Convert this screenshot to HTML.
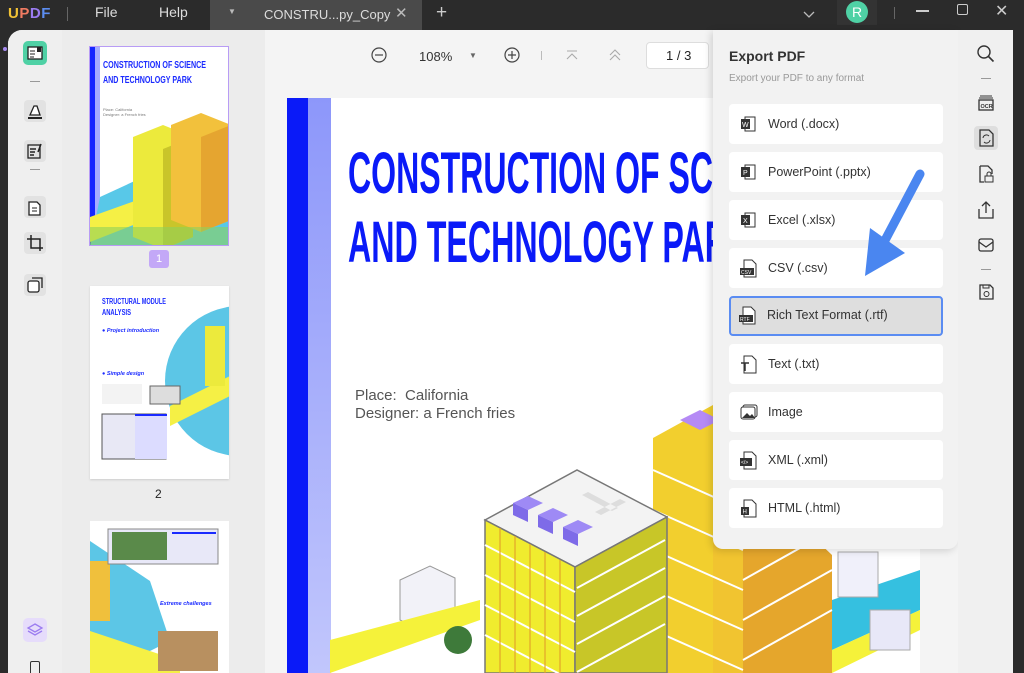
<!DOCTYPE html>
<html><head><meta charset="utf-8"><style>
*{box-sizing:border-box;margin:0;padding:0}
html,body{width:1024px;height:673px;overflow:hidden}
body{background:#2b2b2b;font-family:"Liberation Sans",sans-serif;position:relative}
.abs{position:absolute}
.top{left:0;top:0;width:1024px;height:30px;background:#2b2b2b;color:#ddd;font-size:14px}
.win{left:8px;top:30px;width:1005px;height:643px;background:#f4f4f4;border-radius:14px 14px 0 0;overflow:hidden}
.item{position:absolute;left:729px;width:214px;height:40px;background:#fff;border-radius:4px;font-size:12.5px;color:#333;line-height:40px;padding-left:39px}
.item svg{position:absolute;left:10px;top:10px}
.lt{position:absolute;left:17px;width:22px;height:22px;border-radius:4px;background:#e2e2e2}
</style></head><body>
<div class="abs top">
 <div class="abs" style="left:8px;top:5px;font-weight:bold;font-size:15px;letter-spacing:0.5px"><span style="color:#f2c335">U</span><span style="color:#f07b62">P</span><span style="color:#9b7cf0">D</span><span style="color:#5c8df0">F</span></div>
 <div class="abs" style="left:67px;top:7px;width:1px;height:14px;background:#666"></div>
 <div class="abs" style="left:95px;top:4px">File</div>
 <div class="abs" style="left:159px;top:4px">Help</div>
 <div class="abs" style="left:210px;top:0;width:212px;height:30px;background:#4a4a4a"></div>
 <div class="abs" style="left:228px;top:7px;font-size:8px;color:#bbb">▼</div>
 <div class="abs" style="left:264px;top:7px;font-size:13px;color:#ddd">CONSTRU...py_Copy</div>
 <div class="abs" style="left:395px;top:4px;color:#bbb;font-size:15px">✕</div>
 <div class="abs" style="left:436px;top:2px;color:#ccc;font-size:19px">+</div>
 <svg class="abs" style="left:802px;top:7px" width="14" height="14"><path d="M2 5l5 5 5-5" stroke="#bbb" fill="none" stroke-width="1.3"/></svg>
 <div class="abs" style="left:837px;top:0;width:40px;height:25px;background:#333"></div>
 <div class="abs" style="left:846px;top:1px;width:22px;height:22px;border-radius:50%;background:#4fd1a5;color:#fff;text-align:center;line-height:22px;font-size:14px">R</div>
 <div class="abs" style="left:894px;top:7px;width:1px;height:12px;background:#666"></div>
 <div class="abs" style="left:916px;top:10px;width:13px;height:1.5px;background:#ccc"></div>
 <div class="abs" style="left:957px;top:4px;width:11px;height:11px;border:1.5px solid #ccc;border-radius:2px"></div>
 <div class="abs" style="left:995px;top:1px;color:#ccc;font-size:16px">✕</div>
</div>
<div class="abs win"></div>
<div class="abs" style="left:3px;top:47px;width:4px;height:4px;border-radius:50%;background:#a68af0"></div>
<div class="abs" style="left:8px;top:30px;width:54px;height:643px;background:#efefef;border-radius:14px 0 0 0"></div>
<div class="abs" style="left:23px;top:41px;width:24px;height:24px;border-radius:5px;background:#4fd1a5"><svg width="24" height="24"><rect x="5" y="6" width="14" height="12" fill="#fff" stroke="#222" stroke-width="1.3"/><path d="M7 10h5M7 13h5M7 16h4" stroke="#222"/><rect x="14" y="6" width="4" height="5" fill="#222"/></svg></div>
<div class="abs" style="left:30px;top:81px;width:10px;height:1px;background:#999"></div>
<div class="lt" style="left:24px;top:100px"><svg width="22" height="22"><path d="M6 15l4-9h3l3 9z" fill="#fff" stroke="#222" stroke-width="1.3"/><path d="M4 18h14" stroke="#222" stroke-width="2"/></svg></div>
<div class="lt" style="left:24px;top:140px"><svg width="22" height="22"><rect x="4" y="5" width="12" height="13" fill="none" stroke="#222" stroke-width="1.3"/><path d="M6 9h6M6 12h5M6 15h4M17 4l-3 8" stroke="#222" stroke-width="1.5"/></svg></div>
<div class="abs" style="left:30px;top:169px;width:10px;height:1px;background:#999"></div>
<div class="lt" style="left:24px;top:196px"><svg width="22" height="22"><path d="M5 6h8l3 3v10H5z" fill="#fff" stroke="#222" stroke-width="1.3"/><path d="M8 12h5M8 15h5" stroke="#222"/></svg></div>
<div class="lt" style="left:24px;top:232px"><svg width="22" height="22"><path d="M7 3v13h12M3 7h13v12" fill="none" stroke="#222" stroke-width="1.5"/></svg></div>
<div class="lt" style="left:24px;top:274px"><svg width="22" height="22"><rect x="4" y="7" width="11" height="11" rx="2" fill="#fff" stroke="#222" stroke-width="1.3"/><path d="M8 4h10v10" fill="none" stroke="#222" stroke-width="1.3"/></svg></div>
<div class="abs" style="left:23px;top:618px;width:24px;height:24px;border-radius:5px;background:#e6dcfb"><svg width="24" height="24"><path d="M12 6l7 4-7 4-7-4z M5 13l7 4 7-4" fill="none" stroke="#9b7cf0" stroke-width="1.3"/></svg></div>
<div class="abs" style="left:30px;top:661px;width:10px;height:14px;border:1.3px solid #333;border-radius:2px"></div>
<div class="abs" style="left:62px;top:30px;width:203px;height:643px;background:#ececec"></div>
<div class="abs" style="left:89px;top:46px;width:140px;height:200px;background:#fff;border:1.5px solid #b89cf5;overflow:hidden">
 <div class="abs" style="left:0;top:0;width:5px;height:200px;background:#1527ff"></div>
 <div class="abs" style="left:5px;top:0;width:5px;height:200px;background:#a5adff"></div>
 <svg class="abs" style="left:0;top:0" width="140" height="200">
  <text x="13" y="21" font-family="Liberation Sans" font-weight="bold" font-size="10" fill="#1a2aff" textLength="103" lengthAdjust="spacingAndGlyphs">CONSTRUCTION OF SCIENCE</text>
  <text x="13" y="36" font-family="Liberation Sans" font-weight="bold" font-size="10" fill="#1a2aff" textLength="89" lengthAdjust="spacingAndGlyphs">AND TECHNOLOGY PARK</text>
  <text x="13" y="64" font-size="4" fill="#777">Place: California</text>
  <text x="13" y="69" font-size="4" fill="#777">Designer: a French fries</text>
  <g transform="translate(0,60)"><path d="M10 90l130-60v110H0z" fill="#58c8e8"/><path d="M0 110l140-50v20L0 135z" fill="#f5f045"/><path d="M43 30l30-12 30 12v100l-30 12-30-12z" fill="#ecea3c"/><path d="M73 42v100l30-12V30z" fill="#c9c52a"/><path d="M81 18l30-12 30 12v95l-30 12-30-12z" fill="#f2c13c"/><path d="M111 30v95l30-12V18z" fill="#e5a530"/><path d="M0 120h140v20H0z" fill="#8fd15a" opacity=".6"/></g>
 </svg>
</div>
<div class="abs" style="left:149px;top:250px;width:20px;height:18px;background:#c3a8f7;border-radius:3px;color:#fff;font-size:11px;text-align:center;line-height:18px">1</div>
<div class="abs" style="left:90px;top:286px;width:139px;height:193px;background:#fff;box-shadow:0 1px 2px #ccc;overflow:hidden">
 <svg width="139" height="193"><circle cx="150" cy="95" r="75" fill="#5cc6e6"/><path d="M80 120l60-30v20l-60 30z" fill="#f5f045"/><path d="M115 40h20v60h-20z" fill="#ecea3c"/><rect x="12" y="128" width="64" height="45" fill="#e8e8f5" stroke="#555"/><rect x="45" y="128" width="32" height="45" fill="#dcdcff"/><rect x="45" y="128" width="32" height="2" fill="#1a2aff"/><rect x="12" y="98" width="40" height="20" fill="#f3f3f3"/><rect x="60" y="100" width="30" height="18" fill="#ddd" stroke="#666"/>
 <text x="12" y="18" font-weight="bold" font-size="8" fill="#1a2aff" textLength="64" lengthAdjust="spacingAndGlyphs">STRUCTURAL MODULE</text>
 <text x="12" y="29" font-weight="bold" font-size="8" fill="#1a2aff" textLength="29" lengthAdjust="spacingAndGlyphs">ANALYSIS</text>
 <text x="12" y="46" font-weight="bold" font-style="italic" font-size="5.5" fill="#1a2aff">● Project introduction</text>
 <text x="12" y="89" font-weight="bold" font-style="italic" font-size="5.5" fill="#1a2aff">● Simple design</text></svg>
</div>
<div class="abs" style="left:155px;top:487px;font-size:12px;color:#222">2</div>
<div class="abs" style="left:90px;top:521px;width:139px;height:152px;background:#fff;overflow:hidden">
 <svg width="139" height="160"><path d="M0 20l60 40 20 60-80 40z" fill="#5cc6e6"/><path d="M0 40h20v60H0z" fill="#f0c03c"/><path d="M0 110l90 30v20H0z" fill="#f5f045"/><rect x="18" y="8" width="110" height="35" fill="#e8e8f8" stroke="#888"/><rect x="22" y="11" width="55" height="28" fill="#5a8a4a"/><rect x="82" y="11" width="44" height="2" fill="#1a2aff"/><rect x="68" y="110" width="60" height="40" fill="#b89060"/><text x="70" y="84" font-weight="bold" font-style="italic" font-size="5.5" fill="#1a2aff">Extreme challenges</text></svg>
</div>
<div class="abs" style="left:265px;top:30px;width:695px;height:643px;background:#f4f4f4"></div>
<svg class="abs" style="left:370px;top:46px" width="18" height="18"><circle cx="9" cy="9" r="7" fill="none" stroke="#444" stroke-width="1.2"/><path d="M5 9h8" stroke="#444" stroke-width="1.2"/></svg>
<div class="abs" style="left:419px;top:49px;font-size:13px;color:#333">108%</div>
<div class="abs" style="left:469px;top:51px;font-size:8px;color:#666">▼</div>
<svg class="abs" style="left:503px;top:46px" width="18" height="18"><circle cx="9" cy="9" r="7" fill="none" stroke="#444" stroke-width="1.2"/><path d="M5 9h8M9 5v8" stroke="#444" stroke-width="1.2"/></svg>
<div class="abs" style="left:541px;top:51px;width:1px;height:9px;background:#bbb"></div>
<svg class="abs" style="left:564px;top:48px" width="16" height="14"><path d="M3 3h10M3 11l5-5 5 5" fill="none" stroke="#aaa" stroke-width="1.1"/></svg>
<svg class="abs" style="left:607px;top:48px" width="16" height="14"><path d="M3 7l5-5 5 5M3 12l5-5 5 5" fill="none" stroke="#aaa" stroke-width="1.1"/></svg>
<div class="abs" style="left:646px;top:42px;width:63px;height:27px;background:#fff;border:1px solid #ddd;border-radius:4px;font-size:13px;color:#222;padding:5px 0 0 19px">1 / 3</div>
<div class="abs" style="left:287px;top:98px;width:633px;height:575px;background:#fff;overflow:hidden">
 <div class="abs" style="left:0;top:0;width:21px;height:575px;background:#0a1af8"></div>
 <div class="abs" style="left:21px;top:0;width:23px;height:575px;background:linear-gradient(#8d97fa,#c1c6fc)"></div>
 <div class="abs" style="left:68px;top:289px;font-size:15px;color:#555;line-height:18px">Place:&nbsp; California<br>Designer: a French fries</div>
</div>
<svg class="abs" style="left:0;top:0" width="1024" height="673">
 <text x="348" y="193" font-family="Liberation Sans" font-weight="bold" font-size="58" fill="#0a1af8" textLength="365" lengthAdjust="spacingAndGlyphs">CONSTRUCTION OF SC</text>
 <text x="348" y="262" font-family="Liberation Sans" font-weight="bold" font-size="58" fill="#0a1af8" textLength="380" lengthAdjust="spacingAndGlyphs">AND TECHNOLOGY PAR</text>
 <path d="M832 548h88v125h-88z" fill="#fff"/>
 <path d="M832 600l88-30v40l-88 40z" fill="#35c0e0"/>
 <path d="M832 650l88-40v20l-88 43z" fill="#f5f23a"/>
 <rect x="838" y="552" width="40" height="45" fill="#f0f0fa" stroke="#aaa"/>
 <rect x="870" y="610" width="40" height="40" fill="#e8e8f8" stroke="#aaa"/>
 <path d="M653 438l60-33v268h-60z" fill="#f2cf2e"/>
 <path d="M743 470v203h89V555z" fill="#e5a62c"/>
 <path d="M713 440l30 30v203h-30z" fill="#f1c430"/>
 <g stroke="#fff" stroke-width="2"><path d="M743 500l89-50M743 540l89-50M743 580l89-50M743 620l89-50M743 660l89-50"/><path d="M653 470l90 40M653 510l90 40M653 550l90 40M653 590l90 40M653 630l90 40"/></g>
 <path d="M680 420l20-10 20 10-20 10z" fill="#b58af5"/>
 <path d="M485 520l92-50 90 47-92 50z" fill="#f3f3f3" stroke="#777" stroke-width="1.5"/>
 <path d="M485 520l90 47v106h-90z" fill="#f0ec2e" stroke="#777" stroke-width="1.5"/>
 <path d="M575 567l92-50v156h-92z" fill="#c8c628" stroke="#777" stroke-width="1.5"/>
 <g stroke="#fff" stroke-width="2"><path d="M485 545l90 47M485 575l90 47M485 605l90 47M485 635l90 47"/><path d="M577 588l88-48M577 616l88-48M577 644l88-48M577 672l88-48"/></g>
 <g stroke="#e2a52a" stroke-width="1.2"><path d="M500 528v145M515 536v137M530 544v129M545 552v121M560 560v113"/></g>
 <path d="M513 503l15-7 15 7-15 7z M538 515l15-7 15 7-15 7z M563 527l15-7 15 7-15 7z" fill="#9e8af5"/>
 <path d="M513 503v12l15 7v-12z M538 515v12l15 7v-12z M563 527v12l15 7v-12z" fill="#7e6be8"/>
 <path d="M582 495l30 16 6-3-30-16z M595 512l25-13 6 3-25 13z" fill="#ddd"/>
 <path d="M400 580l30-14 25 12v40l-30 14-25-12z" fill="#f2f2f8" stroke="#999"/>
 <path d="M330 640l150-40v20l-150 53z" fill="#f5f23a"/>
 <circle cx="458" cy="640" r="14" fill="#3e7a3a"/>
</svg>
<div class="abs" style="left:713px;top:30px;width:245px;height:519px;background:#f2f2f2;border-radius:0 0 10px 10px;box-shadow:-2px 2px 8px rgba(0,0,0,.15)"></div>
<div class="abs" style="left:729px;top:48px;font-size:14px;font-weight:bold;color:#333">Export PDF</div>
<div class="abs" style="left:729px;top:73px;font-size:10px;color:#999">Export your PDF to any format</div>
<div class="item" style="top:104px"><svg width="20" height="20"><rect x="6" y="3" width="10" height="14" fill="#fff" stroke="#333"/><rect x="2" y="5" width="9" height="10" fill="#333"/><text x="3" y="13" font-size="7" fill="#fff" font-family="Liberation Sans">W</text></svg>Word (.docx)</div>
<div class="item" style="top:152px"><svg width="20" height="20"><rect x="6" y="3" width="10" height="14" fill="#fff" stroke="#333"/><rect x="2" y="5" width="9" height="10" fill="#333"/><text x="4" y="13" font-size="7" fill="#fff" font-family="Liberation Sans">P</text></svg>PowerPoint (.pptx)</div>
<div class="item" style="top:200px"><svg width="20" height="20"><rect x="6" y="3" width="10" height="14" fill="#fff" stroke="#333"/><rect x="2" y="5" width="9" height="10" fill="#333"/><text x="4" y="13" font-size="7" fill="#fff" font-family="Liberation Sans">X</text></svg>Excel (.xlsx)</div>
<div class="item" style="top:248px"><svg width="20" height="20"><path d="M5 2h8l4 4v13H5z" fill="#fff" stroke="#333"/><rect x="1" y="10" width="14" height="7" fill="#333"/><text x="2" y="16" font-size="5" fill="#fff" font-family="Liberation Sans">CSV</text></svg>CSV (.csv)</div>
<div class="item" style="top:296px;background:#dedede;border:2.5px solid #5a8cf2;line-height:35px;padding-left:36px"><svg width="20" height="20" style="left:7px;top:7px"><path d="M5 2h8l4 4v13H5z" fill="#fff" stroke="#333"/><rect x="1" y="10" width="14" height="7" fill="#333"/><text x="2" y="16" font-size="5" fill="#fff" font-family="Liberation Sans">RTF</text></svg>Rich Text Format (.rtf)</div>
<div class="item" style="top:344px"><svg width="20" height="20"><path d="M5 2h8l4 4v13H5z" fill="#fff" stroke="#333"/><path d="M2 9h8M6 9v8" stroke="#333" stroke-width="1.5"/></svg>Text (.txt)</div>
<div class="item" style="top:392px"><svg width="20" height="20"><rect x="4" y="3" width="14" height="12" rx="2" fill="#fff" stroke="#333"/><rect x="2" y="5" width="14" height="12" rx="2" fill="#fff" stroke="#333"/><path d="M3 16l5-5 3 3 2-2 3 4z" fill="#333"/></svg>Image</div>
<div class="item" style="top:440px"><svg width="20" height="20"><path d="M5 2h8l4 4v13H5z" fill="#fff" stroke="#333"/><rect x="1" y="8" width="12" height="8" fill="#333"/><text x="2" y="14" font-size="5" fill="#fff" font-family="Liberation Sans">&lt;/&gt;</text></svg>XML (.xml)</div>
<div class="item" style="top:488px"><svg width="20" height="20"><path d="M5 2h8l4 4v13H5z" fill="#fff" stroke="#333"/><rect x="2" y="9" width="8" height="8" fill="#333"/><text x="3.5" y="15.5" font-size="6" fill="#fff" font-family="Liberation Sans">H</text></svg>HTML (.html)</div>
<svg class="abs" style="left:860px;top:168px" width="70" height="115"><path d="M60 6L22 78" stroke="#4a86f0" stroke-width="9" stroke-linecap="round"/><path d="M5 108l5-48 35 25z" fill="#4a86f0"/></svg>
<div class="abs" style="left:958px;top:30px;width:55px;height:643px;background:#f0f0f0"></div>
<div class="abs" style="left:1013px;top:30px;width:11px;height:643px;background:#2b2b2b"></div>
<svg class="abs" style="left:976px;top:44px" width="20" height="20"><circle cx="8" cy="8" r="6" fill="none" stroke="#333" stroke-width="1.4"/><path d="M12.5 12.5l5 5" stroke="#333" stroke-width="1.6"/></svg>
<div class="abs" style="left:981px;top:78px;width:10px;height:1px;background:#999"></div>
<svg class="abs" style="left:976px;top:93px" width="20" height="20"><path d="M3 5h14M4 3h12" stroke="#333"/><rect x="3" y="7" width="14" height="10" fill="none" stroke="#333" stroke-width="1.3"/><text x="4.5" y="15" font-size="5.5" font-family="Liberation Sans" font-weight="bold" fill="#333">OCR</text></svg>
<div class="abs" style="left:974px;top:126px;width:24px;height:24px;border-radius:4px;background:#dedede"><svg width="24" height="24"><path d="M6 4h9l4 4v12H6z" fill="none" stroke="#333" stroke-width="1.3"/><path d="M9 12a3.5 3.5 0 016-2M16 14a3.5 3.5 0 01-6 2" fill="none" stroke="#333"/></svg></div>
<svg class="abs" style="left:976px;top:164px" width="20" height="20"><path d="M4 2h8l4 4v4M8 18H4V2" fill="none" stroke="#333" stroke-width="1.3"/><rect x="9" y="12" width="8" height="6" fill="none" stroke="#333"/><path d="M11 12v-2a2 2 0 014 0v2" fill="none" stroke="#333"/></svg>
<svg class="abs" style="left:976px;top:200px" width="20" height="20"><path d="M3 9v9h14V9M10 13V2M6 6l4-4 4 4" fill="none" stroke="#333" stroke-width="1.3"/></svg>
<svg class="abs" style="left:976px;top:235px" width="20" height="20"><rect x="3" y="4" width="14" height="12" rx="2" fill="none" stroke="#333" stroke-width="1.3"/><path d="M3 7l7 5 7-5" fill="none" stroke="#333" stroke-width="1.3"/></svg>
<div class="abs" style="left:981px;top:269px;width:10px;height:1px;background:#999"></div>
<svg class="abs" style="left:976px;top:282px" width="20" height="20"><path d="M4 3h10l3 3v11H4z" fill="none" stroke="#333" stroke-width="1.3"/><circle cx="10.5" cy="12" r="2.5" fill="none" stroke="#333"/><path d="M7 3v3h6V3" fill="none" stroke="#333"/></svg>
</body></html>
